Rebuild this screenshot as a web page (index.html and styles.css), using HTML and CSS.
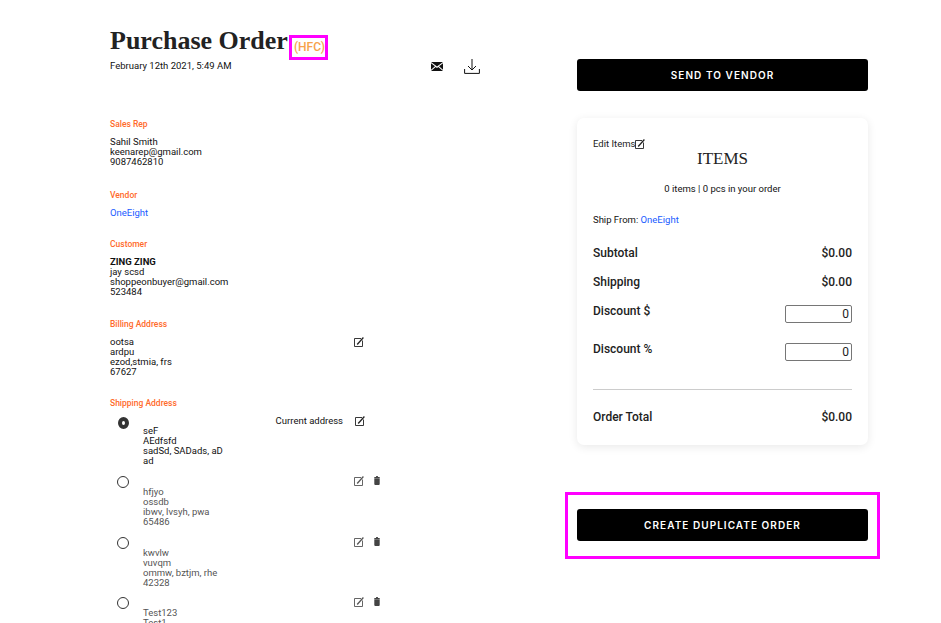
FILE: index.html
```html
<!DOCTYPE html>
<html lang="en">
<head>
  <meta charset="UTF-8">
  <meta name="viewport" content="width=device-width, initial-scale=1.0">
  <title>Purchase Order</title>
  <link rel="stylesheet" href="styles.css">
</head>
<body>

  <svg class="icon-defs" width="0" height="0">
    <symbol id="icon-edit" viewBox="0 0 10 10">
      <path d="M8.5 3.5v6h-8v-8h6.500" fill="none" stroke="currentColor" stroke-width=".9"/>
      <path d="M3.200 7.500 9.400.5" fill="none" stroke="currentColor" stroke-width="1.300"/>
    </symbol>
    <symbol id="icon-trash" viewBox="0 0 8 10">
      <path d="M3 0h2v1h2v1.200H1V1h2z" fill="currentColor"/>
      <path d="M1 2.600h6v6.600l-.7.8H1.700L1 9.200z" fill="currentColor"/>
    </symbol>
  </svg>

  <div class="page">

    <main class="details">
      <header class="order-head">
        <div class="title-row">
          <h1>Purchase Order</h1>
          <span class="type-tag">(HFC)</span>
        </div>
        <div class="date-row">
          <span class="order-date">February 12th 2021, 5:49 AM</span>
          <div class="head-icons">
            <svg class="mail-icon" viewBox="0 0 12 9">
              <path d="M0 0h12L6 4.600z"/>
              <path d="M0 1.200V7.800L4 4.200z"/>
              <path d="M12 1.200V7.800L8 4.200z"/>
              <path d="M0 9h12L7.300 5 6 6 4.700 5z"/>
            </svg>
            <svg class="download-icon" viewBox="0 0 16 15">
              <path d="M8 0v10.500M4 7l4 4 4-4" fill="none" stroke="#111" stroke-width="1"/>
              <path d="M.6 10v4.400h14.800V10" fill="none" stroke="#111" stroke-width="1"/>
            </svg>
          </div>
        </div>
      </header>

      <section class="info-block roomy">
        <h3>Sales Rep</h3>
        <p>Sahil Smith<br>keenarep@gmail.com<br>9087462810</p>
      </section>

      <section class="info-block tight">
        <h3>Vendor</h3>
        <p><a href="#">OneEight</a></p>
      </section>

      <section class="info-block">
        <h3>Customer</h3>
        <p><strong>ZING ZING</strong><br>jay scsd<br>shoppeonbuyer@gmail.com<br>523484</p>
      </section>

      <section class="info-block tight">
        <h3>Billing Address</h3>
        <div class="billing-row">
          <p>ootsa<br>ardpu<br>ezod,stmia, frs<br>67627</p>
          <svg class="edit-icon"><use href="#icon-edit"/></svg>
        </div>
      </section>

      <section class="info-block shipping">
        <h3>Shipping Address</h3>

        <div class="address current">
          <span class="radio checked"></span>
          <p>seF<br>AEdfsfd<br>sadSd, SADads, aD<br>ad</p>
          <div class="address-actions">
            <span>Current address</span>
            <svg class="edit-icon"><use href="#icon-edit"/></svg>
          </div>
        </div>

        <div class="address">
          <span class="radio"></span>
          <p>hfjyo<br>ossdb<br>ibwv, lvsyh, pwa<br>65486</p>
          <div class="address-actions">
            <svg class="edit-icon"><use href="#icon-edit"/></svg>
            <svg class="trash-icon"><use href="#icon-trash"/></svg>
          </div>
        </div>

        <div class="address">
          <span class="radio"></span>
          <p>kwvlw<br>vuvqm<br>ommw, bztjm, rhe<br>42328</p>
          <div class="address-actions">
            <svg class="edit-icon"><use href="#icon-edit"/></svg>
            <svg class="trash-icon"><use href="#icon-trash"/></svg>
          </div>
        </div>

        <div class="address">
          <span class="radio"></span>
          <p>Test123<br>Test1</p>
          <div class="address-actions">
            <svg class="edit-icon"><use href="#icon-edit"/></svg>
            <svg class="trash-icon"><use href="#icon-trash"/></svg>
          </div>
        </div>
      </section>
    </main>

    <aside class="summary">
      <button class="black-btn" type="button">SEND TO VENDOR</button>

      <div class="summary-card">
        <div class="edit-items">Edit Items<svg class="edit-icon"><use href="#icon-edit"/></svg></div>
        <h2>ITEMS</h2>
        <p class="item-count">0 items | 0 pcs in your order</p>
        <p class="ship-from">Ship From: <a href="#">OneEight</a></p>

        <div class="total-row"><span>Subtotal</span><span>$0.00</span></div>
        <div class="total-row"><span>Shipping</span><span>$0.00</span></div>
        <div class="total-row discount"><span>Discount $</span><input type="text" value="0"></div>
        <div class="total-row discount"><span>Discount %</span><input type="text" value="0"></div>
        <hr>
        <div class="total-row"><span>Order Total</span><span>$0.00</span></div>
      </div>

      <div class="duplicate-box">
        <button class="black-btn" type="button">CREATE DUPLICATE ORDER</button>
      </div>
    </aside>

  </div>

</body>
</html>
```

FILE: styles.css
```css
html, body {
  height: 100%;
  overflow: hidden; /* screenshot is only the first screen */
}

body {
  margin: 0;
  background-color: #fff;
  color: #111;
  font-family: Roboto, Arial, sans-serif;
  font-size: 9.5px;
  line-height: 10px;
}

p, h1, h2, h3 {
  margin: 0;
}

a {
  color: #1a5cff;
  text-decoration: none;
}

.icon-defs {
  position: absolute;
}

.page {
  display: flex;
  padding-left: 110px;
}

/* left column */

.details {
  width: 372px;
}

.order-head {
  padding-top: 25px;
  margin-bottom: 47px;
}

.title-row {
  display: flex;
  align-items: flex-end;
  height: 35px;
}

.title-row h1 {
  margin-bottom: 4px;
  font-family: "Liberation Serif", "DejaVu Serif", serif;
  font-size: 26px;
  line-height: 30px;
  font-weight: 700;
  color: #222;
}

.type-tag {
  box-sizing: border-box;
  height: 25px;
  margin-left: 1px;
  padding-left: 2px;
  border: 3px solid #f0f;
  color: #f7a24b;
  font-size: 12px;
  font-weight: 500;
  line-height: 19px;
}

.date-row {
  display: flex;
  justify-content: space-between;
  height: 12px;
}

.order-date {
  line-height: 12px;
}

.head-icons {
  display: flex;
  align-items: center;
  gap: 21px;
  padding-right: 2px;
}

.mail-icon {
  width: 12px;
  height: 9px;
  fill: #111;
}

.download-icon {
  width: 16px;
  height: 15px;
}

.info-block {
  margin-bottom: 22px;
}

.info-block.roomy {
  margin-bottom: 23px;
}

.info-block.tight {
  margin-bottom: 21px;
}

.info-block h3 {
  margin-bottom: 8px;
  color: #ff6a2b;
  font-size: 8.5px;
  line-height: 10px;
  font-weight: 500;
}

.info-block strong {
  font-weight: 700;
}

.billing-row {
  display: flex;
  justify-content: space-between;
  width: 254px;
}

.edit-icon {
  flex: none;
  width: 10px;
  height: 10px;
  color: #222;
}

.trash-icon {
  flex: none;
  width: 8px;
  height: 9px;
  color: #444;
}

.address {
  display: flex;
  position: relative;
  box-sizing: border-box;
  width: 271px;
  min-height: 50px;
  margin-bottom: 10.5px;
  padding-left: 33px;
  color: #555;
}

.address p {
  padding-top: 10px;
}

.address .edit-icon {
  color: #555;
}

.address.current {
  margin-top: 10px;
  margin-bottom: 9px;
  color: #111;
}

.address.current p {
  padding-top: 8px;
}

.radio {
  box-sizing: border-box;
  position: absolute;
  left: 7px;
  top: -1px;
  width: 12px;
  height: 12px;
  border: 1px solid #333;
  border-radius: 50%;
  background-color: #fff;
}

.radio.checked {
  left: 8px;
  width: 11px;
  border: 4px solid #333;
}

.address-actions {
  display: flex;
  align-items: flex-start;
  gap: 9px;
  margin-top: -1px;
  margin-left: auto;
  color: #111;
}

.current .address-actions {
  gap: 12px;
  margin-top: -2px;
  margin-right: 16px;
}

.current .edit-icon {
  color: #222;
}

/* right column */

.summary {
  width: 291px;
  margin-left: 95px;
  padding-top: 59px;
}

.black-btn {
  display: block;
  width: 100%;
  height: 32px;
  border: 0;
  border-radius: 3px;
  background-color: #000;
  color: #fff;
  font-family: Inter, Arial, sans-serif;
  font-size: 10px;
  font-weight: 600;
  letter-spacing: 1.05px;
}

.summary-card {
  box-sizing: border-box;
  height: 327px;
  margin-top: 27px;
  padding: 21px 16px 0;
  border-radius: 7px;
  background-color: #fff;
  box-shadow: 0 2px 10px rgba(0, 0, 0, 0.09);
}

.edit-items {
  display: flex;
  align-items: center;
  color: #222;
}

.summary-card h2 {
  font-family: "Liberation Serif", serif;
  font-size: 17px;
  line-height: 20px;
  font-weight: 400;
  text-align: center;
  color: #222;
}

.item-count {
  margin-top: 15px;
  text-align: center;
}

.ship-from {
  margin-top: 21px;
}

.total-row {
  display: flex;
  justify-content: space-between;
  height: 29px;
  color: #222;
  font-size: 12px;
  line-height: 14px;
  font-weight: 500;
}

.ship-from + .total-row {
  margin-top: 21px;
}

.total-row.discount {
  height: 38px;
}

.total-row input {
  box-sizing: border-box;
  width: 67px;
  height: 18px;
  margin-top: 1px;
  padding: 1px 2px;
  border: 1px solid #767676;
  border-radius: 2px;
  color: #222;
  font-family: Roboto, Arial, sans-serif;
  font-size: 12px;
  text-align: right;
}

.summary-card hr {
  height: 1px;
  margin: 9px 0 20px;
  border: 0;
  background-color: #ccc;
}

.duplicate-box {
  box-sizing: border-box;
  width: 315px;
  height: 67px;
  margin-top: 47px;
  margin-left: -12px;
  padding: 14px 9px;
  border: 3px solid #f0f;
}
```
